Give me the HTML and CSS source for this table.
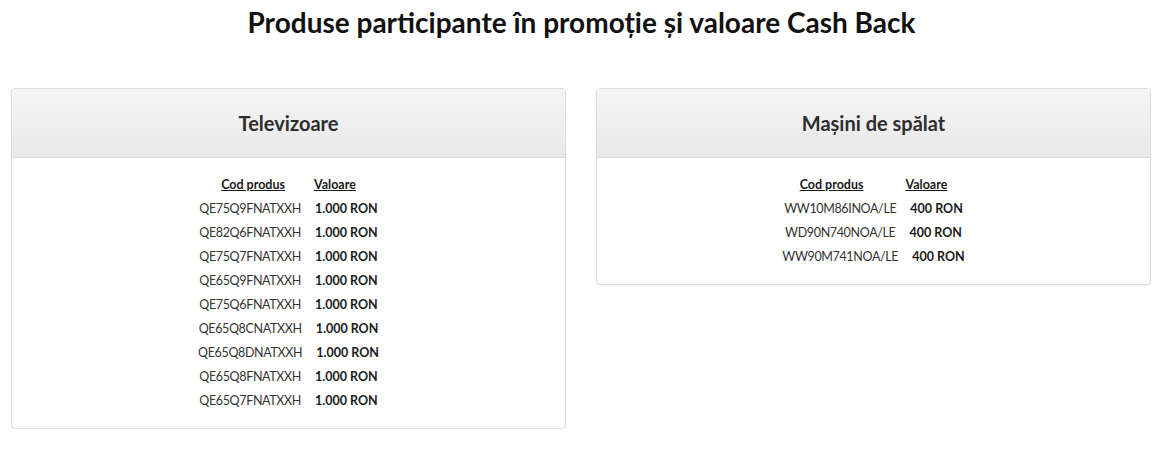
FILE: index.html
```html
<!DOCTYPE html>
<html lang="ro">
<head>
<meta charset="utf-8">
<title>Produse participante</title>
<link rel="stylesheet" href="styles.css">
</head>
<body>
<h1 class="page-title">Produse participante în promoție și valoare Cash Back</h1>
<div class="cards">
  <section class="card">
    <div class="card-head"><h2 class="card-title">Televizoare</h2></div>
    <div class="card-body">
      <div class="row row-head"><span>Cod produs</span><span>Valoare</span></div>
      <div class="row"><span class="code">QE75Q9FNATXXH</span><b>1.000 RON</b></div>
      <div class="row"><span class="code">QE82Q6FNATXXH</span><b>1.000 RON</b></div>
      <div class="row"><span class="code">QE75Q7FNATXXH</span><b>1.000 RON</b></div>
      <div class="row"><span class="code">QE65Q9FNATXXH</span><b>1.000 RON</b></div>
      <div class="row"><span class="code">QE75Q6FNATXXH</span><b>1.000 RON</b></div>
      <div class="row"><span class="code">QE65Q8CNATXXH</span><b>1.000 RON</b></div>
      <div class="row"><span class="code">QE65Q8DNATXXH</span><b>1.000 RON</b></div>
      <div class="row"><span class="code">QE65Q8FNATXXH</span><b>1.000 RON</b></div>
      <div class="row"><span class="code">QE65Q7FNATXXH</span><b>1.000 RON</b></div>
    </div>
  </section>
  <section class="card">
    <div class="card-head"><h2 class="card-title">Mașini de spălat</h2></div>
    <div class="card-body">
      <div class="row row-head row-head-wide"><span>Cod produs</span><span>Valoare</span></div>
      <div class="row"><span class="code">WW10M86INOA/LE</span><b>400 RON</b></div>
      <div class="row"><span class="code">WD90N740NOA/LE</span><b>400 RON</b></div>
      <div class="row"><span class="code">WW90M741NOA/LE</span><b>400 RON</b></div>
    </div>
  </section>
</div>
</body>
</html>
```
FILE: styles.css
```css
html, body {
  margin: 0;
  padding: 0;
  background: #fff;
}
body {
  font-family: Lato, "Open Sans", sans-serif;
  color: #222;
}
.page-title {
  margin: 0;
  padding-top: 4px;
  height: 84px;
  box-sizing: border-box;
  font-size: 28px;
  line-height: 36px;
  font-weight: 700;
  text-align: center;
  color: #111;
}
.cards {
  display: flex;
  align-items: flex-start;
  gap: 30px;
  padding: 4px 12px 0 11px;
}
.card {
  flex: 1 1 0;
  border: 1px solid #dcdcdc;
  border-radius: 4px;
  box-shadow: 0 1px 2px rgba(0,0,0,0.06);
  overflow: hidden;
  background: #fff;
}
.card-head {
  height: 68px;
  background: linear-gradient(#f5f5f5, #e8e8e8);
  border-bottom: 1px solid #dadada;
  display: flex;
  align-items: center;
  justify-content: center;
}
.card-title {
  margin: 0;
  font-size: 20px;
  font-weight: 700;
  color: #2d2d2d;
}
.card-body {
  padding: 15px 0 15px;
}
.row {
  display: flex;
  justify-content: center;
  gap: 14px;
  font-size: 12.5px;
  line-height: 24px;
  color: #333;
}
.row .code {
  letter-spacing: -0.35px;
}
.row b {
  font-weight: 700;
  color: #1a1a1a;
}
.row-head {
  gap: 29px;
  font-weight: 700;
  color: #1a1a1a;
}
.row-head-wide {
  gap: 42px;
}
.row-head span {
  text-decoration: underline;
}
```
